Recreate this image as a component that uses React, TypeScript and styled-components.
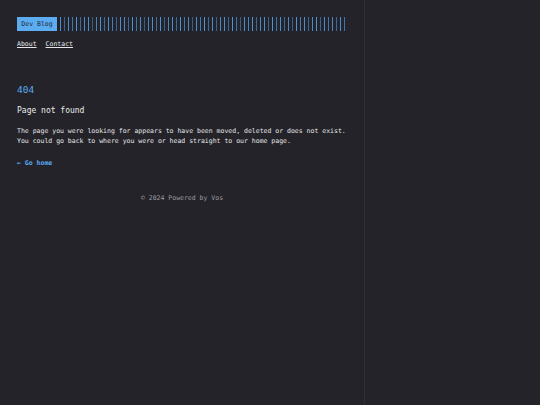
import * as React from 'react';
import styled, { createGlobalStyle } from 'styled-components';

const GlobalStyle = createGlobalStyle`
  html, body {
    margin: 0;
    padding: 0;
    background: #232329;
  }
  * {
    box-sizing: border-box;
  }
`;

const barLevels = [
  0.9, 0.55, 0.9, 0.7, 0.95, 0.6, 0.85, 0.9, 0.5, 0.8, 0.95, 0.6, 0.9, 0.75, 0.55, 0.9,
  0.85, 0.6, 0.95, 0.7, 0.9, 0.5, 0.85, 0.9, 0.65, 0.95, 0.55, 0.8, 0.9, 0.6, 0.95, 0.7,
  0.85, 0.5, 0.9, 0.75, 0.95, 0.6, 0.9, 0.55, 0.85, 0.9, 0.6, 0.95, 0.7, 0.5, 0.9, 0.8,
  0.95, 0.6, 0.85, 0.9, 0.55, 0.95, 0.7, 0.9, 0.6, 0.85, 0.5, 0.95, 0.75, 0.9, 0.6, 0.85,
  0.95, 0.55, 0.9, 0.7, 0.85, 0.6, 0.9, 0.7,
];

export default function App() {
  return (
    <>
      <GlobalStyle />
      <Page>
        <Main>
          <Header>
            <Brand>Dev Blog</Brand>
            <Bars>
              {barLevels.map((level, index) => (
                <Bar key={index} style={{ opacity: level }} />
              ))}
            </Bars>
          </Header>
          <Nav>
            <NavLink href="#">About</NavLink>
            <NavLink href="#">Contact</NavLink>
          </Nav>
          <Content>
            <Code>404</Code>
            <Title>Page not found</Title>
            <Text>
              The page you were looking for appears to have been moved, deleted or does not exist.
              <br />
              You could go back to where you were or head straight to our home page.
            </Text>
            <HomeLink href="#">← Go home</HomeLink>
          </Content>
          <Footer>© 2024 Powered by Vos</Footer>
        </Main>
        <Aside />
      </Page>
    </>
  );
}

const Page = styled.div`
  display: flex;
  min-height: 405px;
  font-family: "DejaVu Sans Mono", "Liberation Mono", monospace;
  color: #e6e6e6;
`;

const Main = styled.main`
  flex: 0 0 365px;
  padding: 17px 17px 0;
  border-right: 1px solid #2f2f36;
  display: flex;
  flex-direction: column;
`;

const Aside = styled.div`
  flex: 1;
`;

const Header = styled.header`
  display: flex;
  align-items: center;
  gap: 3px;
  height: 14px;
`;

const Brand = styled.div`
  flex: 0 0 40px;
  height: 14px;
  background: #5cacf2;
  color: #1f2a36;
  font-size: 6.5px;
  line-height: 14px;
  text-align: center;
  white-space: nowrap;
`;

const Bars = styled.div`
  display: flex;
  gap: 3px;
  height: 14px;
`;

const Bar = styled.span`
  flex: 0 0 1px;
  height: 14px;
  background: #4e9ae4;
`;

const Nav = styled.nav`
  display: flex;
  gap: 9px;
  margin-top: 8px;
`;

const NavLink = styled.a`
  color: #e6e6e6;
  font-size: 6.5px;
  line-height: 10px;
  text-decoration: underline;
  text-underline-offset: 1px;
`;

const Content = styled.section`
  display: flex;
  flex-direction: column;
  align-items: flex-start;
  margin-top: 35px;
`;

const Code = styled.h1`
  margin: 0;
  color: #5aa9ec;
  font-size: 9.5px;
  line-height: 12px;
  font-weight: normal;
`;

const Title = styled.h2`
  margin: 9px 0 0;
  font-size: 8px;
  line-height: 12px;
  font-weight: normal;
  color: #ececec;
`;

const Text = styled.p`
  margin: 9px 0 0;
  font-size: 6.5px;
  line-height: 10px;
  color: #e6e6e6;
  white-space: nowrap;
`;

const HomeLink = styled.a`
  margin-top: 12px;
  color: #5aa9ec;
  font-size: 6.5px;
  line-height: 10px;
  font-weight: bold;
  text-decoration: none;
`;

const Footer = styled.footer`
  margin-top: 25px;
  text-align: center;
  color: #9a9aa0;
  font-size: 6.5px;
  line-height: 10px;
`;
